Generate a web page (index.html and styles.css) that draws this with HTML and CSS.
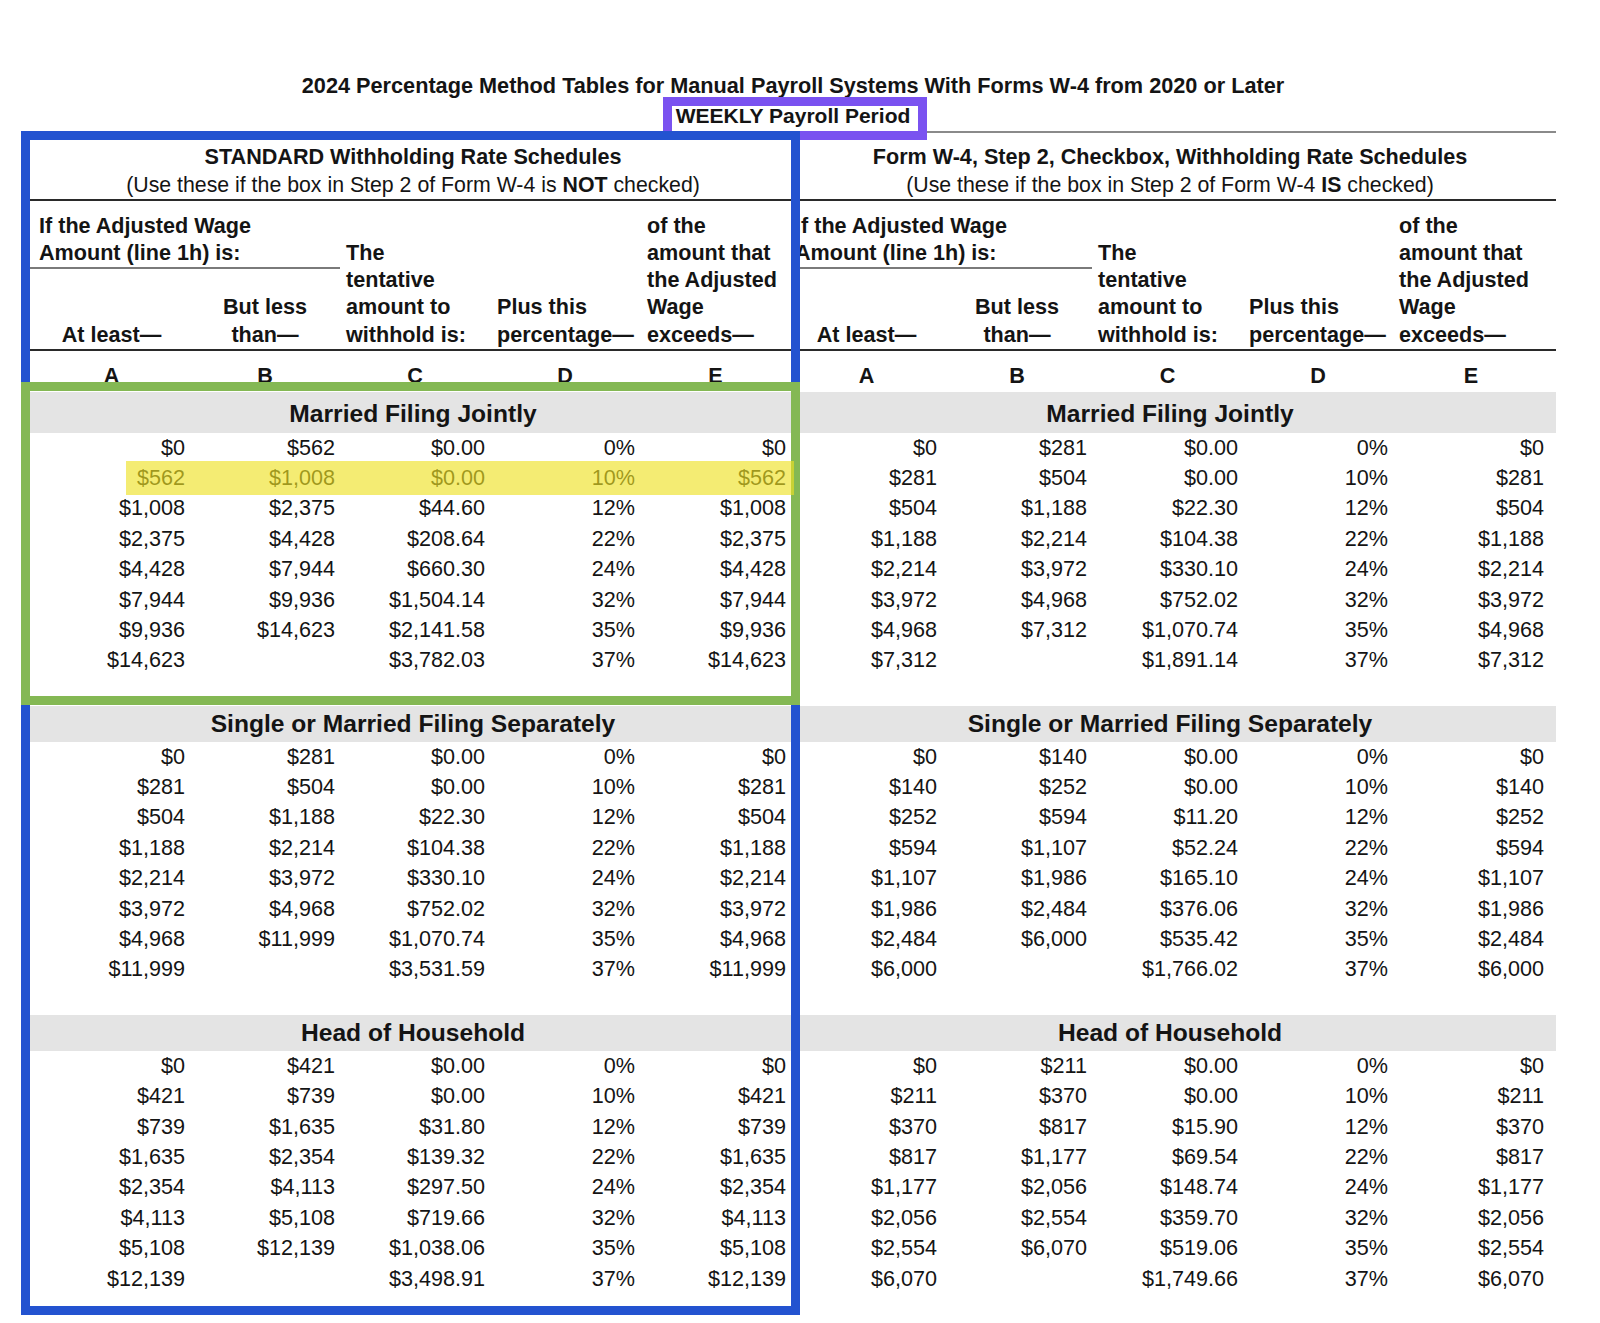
FILE: index.html
```html
<!DOCTYPE html>
<html lang="en">
<head>
<meta charset="utf-8">
<title>2024 Percentage Method Tables — Weekly Payroll Period</title>
<link rel="stylesheet" href="styles.css">
</head>
<body>
<div class="page">
  <div class="doc">
    <div class="title-line">2024 Percentage Method Tables for Manual Payroll Systems With Forms W-4 from 2020 or Later</div>
    <div class="title-line"><span class="period-label">WEEKLY Payroll Period</span></div>

    <div class="sheet">
      <div class="row sched-row">
        <div class="sched sched-l"><b>STANDARD Withholding Rate Schedules</b><br><span class="sub">(Use these if the box in Step 2 of Form W-4 is <b>NOT</b> checked)</span></div>
        <div class="sched sched-r"><b>Form W-4, Step 2, Checkbox, Withholding Rate Schedules</b><br><span class="sub">(Use these if the box in Step 2 of Form W-4 <b>IS</b> checked)</span></div>
      </div>

      <div class="row head-row">
        <div class="h wage wage-l">If the Adjusted Wage<br>Amount (line 1h) is:</div>
        <div class="h ha c1">At least—</div>
        <div class="h hb c2">But less<br>than—</div>
        <div class="h hc c3">The<br>tentative<br>amount to<br>withhold is:</div>
        <div class="h hd c4">Plus this<br>percentage—</div>
        <div class="h he c5">of the<br>amount that<br>the Adjusted<br>Wage<br>exceeds—</div>
        <div class="h wage wage-r">If the Adjusted Wage<br>Amount (line 1h) is:</div>
        <div class="h ha c6">At least—</div>
        <div class="h hb c7">But less<br>than—</div>
        <div class="h hc c8">The<br>tentative<br>amount to<br>withhold is:</div>
        <div class="h hd c9">Plus this<br>percentage—</div>
        <div class="h he c10">of the<br>amount that<br>the Adjusted<br>Wage<br>exceeds—</div>
      </div>

      <div class="row letters-row">
        <span>A</span><span>B</span><span>C</span><span>D</span><span>E</span>
        <span>A</span><span>B</span><span>C</span><span>D</span><span>E</span>
      </div>

      <!-- Married Filing Jointly -->
      <div class="row band band-first"><div class="band-t band-l">Married Filing Jointly</div><div class="band-t">Married Filing Jointly</div></div>
      <div class="row data"><span>$0</span><span>$562</span><span>$0.00</span><span>0%</span><span>$0</span><span>$0</span><span>$281</span><span>$0.00</span><span>0%</span><span>$0</span></div>
      <div class="row data"><span>$562</span><span>$1,008</span><span>$0.00</span><span>10%</span><span>$562</span><span>$281</span><span>$504</span><span>$0.00</span><span>10%</span><span>$281</span></div>
      <div class="row data"><span>$1,008</span><span>$2,375</span><span>$44.60</span><span>12%</span><span>$1,008</span><span>$504</span><span>$1,188</span><span>$22.30</span><span>12%</span><span>$504</span></div>
      <div class="row data"><span>$2,375</span><span>$4,428</span><span>$208.64</span><span>22%</span><span>$2,375</span><span>$1,188</span><span>$2,214</span><span>$104.38</span><span>22%</span><span>$1,188</span></div>
      <div class="row data"><span>$4,428</span><span>$7,944</span><span>$660.30</span><span>24%</span><span>$4,428</span><span>$2,214</span><span>$3,972</span><span>$330.10</span><span>24%</span><span>$2,214</span></div>
      <div class="row data"><span>$7,944</span><span>$9,936</span><span>$1,504.14</span><span>32%</span><span>$7,944</span><span>$3,972</span><span>$4,968</span><span>$752.02</span><span>32%</span><span>$3,972</span></div>
      <div class="row data"><span>$9,936</span><span>$14,623</span><span>$2,141.58</span><span>35%</span><span>$9,936</span><span>$4,968</span><span>$7,312</span><span>$1,070.74</span><span>35%</span><span>$4,968</span></div>
      <div class="row data"><span>$14,623</span><span></span><span>$3,782.03</span><span>37%</span><span>$14,623</span><span>$7,312</span><span></span><span>$1,891.14</span><span>37%</span><span>$7,312</span></div>
      <div class="row spacer"></div>

      <!-- Single or Married Filing Separately -->
      <div class="row band"><div class="band-t band-l">Single or Married Filing Separately</div><div class="band-t">Single or Married Filing Separately</div></div>
      <div class="row data"><span>$0</span><span>$281</span><span>$0.00</span><span>0%</span><span>$0</span><span>$0</span><span>$140</span><span>$0.00</span><span>0%</span><span>$0</span></div>
      <div class="row data"><span>$281</span><span>$504</span><span>$0.00</span><span>10%</span><span>$281</span><span>$140</span><span>$252</span><span>$0.00</span><span>10%</span><span>$140</span></div>
      <div class="row data"><span>$504</span><span>$1,188</span><span>$22.30</span><span>12%</span><span>$504</span><span>$252</span><span>$594</span><span>$11.20</span><span>12%</span><span>$252</span></div>
      <div class="row data"><span>$1,188</span><span>$2,214</span><span>$104.38</span><span>22%</span><span>$1,188</span><span>$594</span><span>$1,107</span><span>$52.24</span><span>22%</span><span>$594</span></div>
      <div class="row data"><span>$2,214</span><span>$3,972</span><span>$330.10</span><span>24%</span><span>$2,214</span><span>$1,107</span><span>$1,986</span><span>$165.10</span><span>24%</span><span>$1,107</span></div>
      <div class="row data"><span>$3,972</span><span>$4,968</span><span>$752.02</span><span>32%</span><span>$3,972</span><span>$1,986</span><span>$2,484</span><span>$376.06</span><span>32%</span><span>$1,986</span></div>
      <div class="row data"><span>$4,968</span><span>$11,999</span><span>$1,070.74</span><span>35%</span><span>$4,968</span><span>$2,484</span><span>$6,000</span><span>$535.42</span><span>35%</span><span>$2,484</span></div>
      <div class="row data"><span>$11,999</span><span></span><span>$3,531.59</span><span>37%</span><span>$11,999</span><span>$6,000</span><span></span><span>$1,766.02</span><span>37%</span><span>$6,000</span></div>
      <div class="row spacer"></div>

      <!-- Head of Household -->
      <div class="row band"><div class="band-t band-l">Head of Household</div><div class="band-t">Head of Household</div></div>
      <div class="row data"><span>$0</span><span>$421</span><span>$0.00</span><span>0%</span><span>$0</span><span>$0</span><span>$211</span><span>$0.00</span><span>0%</span><span>$0</span></div>
      <div class="row data"><span>$421</span><span>$739</span><span>$0.00</span><span>10%</span><span>$421</span><span>$211</span><span>$370</span><span>$0.00</span><span>10%</span><span>$211</span></div>
      <div class="row data"><span>$739</span><span>$1,635</span><span>$31.80</span><span>12%</span><span>$739</span><span>$370</span><span>$817</span><span>$15.90</span><span>12%</span><span>$370</span></div>
      <div class="row data"><span>$1,635</span><span>$2,354</span><span>$139.32</span><span>22%</span><span>$1,635</span><span>$817</span><span>$1,177</span><span>$69.54</span><span>22%</span><span>$817</span></div>
      <div class="row data"><span>$2,354</span><span>$4,113</span><span>$297.50</span><span>24%</span><span>$2,354</span><span>$1,177</span><span>$2,056</span><span>$148.74</span><span>24%</span><span>$1,177</span></div>
      <div class="row data"><span>$4,113</span><span>$5,108</span><span>$719.66</span><span>32%</span><span>$4,113</span><span>$2,056</span><span>$2,554</span><span>$359.70</span><span>32%</span><span>$2,056</span></div>
      <div class="row data"><span>$5,108</span><span>$12,139</span><span>$1,038.06</span><span>35%</span><span>$5,108</span><span>$2,554</span><span>$6,070</span><span>$519.06</span><span>35%</span><span>$2,554</span></div>
      <div class="row data"><span>$12,139</span><span></span><span>$3,498.91</span><span>37%</span><span>$12,139</span><span>$6,070</span><span></span><span>$1,749.66</span><span>37%</span><span>$6,070</span></div>
      <div class="row spacer"></div>
    </div>
  </div>

  <div class="mark mark-blue"></div>
  <div class="mark mark-green"></div>
  <div class="mark mark-yellow"></div>
</div>
</body>
</html>
```

FILE: styles.css
```css
:root {
  --cols: 160px 150px 150px 150px 151px 151px 150px 151px 150px 156px 7px;
  --ink: #141414;
  --rule: #2a2a2a;
}

* { box-sizing: border-box; }

html, body {
  margin: 0;
  padding: 0;
  background: #ffffff;
}

body {
  font-family: "Liberation Sans", Arial, Helvetica, sans-serif;
  color: var(--ink);
  font-size: 21.6px;
}

.page {
  position: relative;
  width: 1600px;
  height: 1323px;
  overflow: hidden;
}

.doc {
  margin-left: 30px;
  width: 1526px;
  padding-top: 71px;
}

.title-line {
  text-align: center;
  font-weight: bold;
  font-size: 21.7px;
  line-height: 30px;
  white-space: nowrap;
}

.period-label {
  position: relative;
  display: inline-block;
  font-size: 21px;
  line-height: 30px;
}

.period-label::after {
  content: "";
  position: absolute;
  left: -13px;
  right: -17px;
  top: -4px;
  bottom: -9px;
  border: 9px solid #7a52f0;
}

.sheet {
  border-top: 2px solid #8a8a8a;
}

.row {
  display: grid;
  grid-template-columns: var(--cols);
}

/* schedule titles */
.sched-row {
  padding: 10px 0 0;
  border-bottom: 2px solid var(--rule);
  line-height: 27.7px;
  height: 68px;
}
.sched {
  text-align: center;
  white-space: nowrap;
}
.sched .sub { font-size: 21.3px; }
.sched-l { grid-column: 1 / 6; padding-left: 5px; }
.sched-r { grid-column: 6 / 11; }

/* column headers */
.head-row {
  grid-template-rows: 57px 79.25px;
  padding: 10.5px 0 1.5px;
  border-bottom: 2px solid var(--rule);
  font-weight: bold;
  line-height: 27.25px;
  white-space: nowrap;
}
.h { align-self: end; }
.wage {
  grid-row: 1;
  align-self: stretch;
  border-bottom: 2px solid #7a7a7a;
}
.wage-l { grid-column: 1 / 3; padding-left: 9px; }
.wage-r { grid-column: 6 / 8; padding-left: 4px; }
.ha, .hb { grid-row: 2; text-align: center; }
.hc, .hd, .he { grid-row: 1 / 3; padding-left: 6px; }
.c1 { grid-column: 1; padding-left: 3px; }
.c2 { grid-column: 2; }
.c3 { grid-column: 3; }
.c4 { grid-column: 4; padding-left: 7px; }
.c5 { grid-column: 5; padding-left: 7px; }
.c6 { grid-column: 6; }
.c7 { grid-column: 7; }
.c8 { grid-column: 8; }
.c9 { grid-column: 9; }
.c10 { grid-column: 10; }

/* A B C D E */
.letters-row {
  height: 40.3px;
  padding-top: 14.5px;
  line-height: 20px;
  font-weight: bold;
  text-align: center;
}
.letters-row span:first-child { padding-left: 3px; }

/* section bands */
.band {
  background: #e4e4e4;
  font-weight: bold;
  font-size: 24.6px;
  height: 36px;
  line-height: 36px;
}
.band-first {
  height: 41px;
  padding-top: 2px;
  line-height: 39px;
}
.band-t {
  grid-column: span 5;
  text-align: center;
  white-space: nowrap;
}
.band-l { padding-left: 5px; }

/* data rows */
.data {
  height: 30.4px;
  line-height: 30.4px;
  text-align: right;
  white-space: nowrap;
}
.data span { padding-right: 5px; }

.spacer { height: 30px; }

/* annotation overlays */
.mark {
  position: absolute;
  pointer-events: none;
}
.mark-blue {
  left: 21px;
  top: 131px;
  width: 779px;
  height: 1184px;
  border: 9px solid #2353d0;
}
.mark-green {
  left: 21px;
  top: 382px;
  width: 779px;
  height: 323px;
  border: 9px solid #84b854;
}
.mark-yellow {
  left: 126px;
  top: 461px;
  width: 668px;
  height: 34px;
  background: rgba(238, 226, 36, 0.64);
}
```
